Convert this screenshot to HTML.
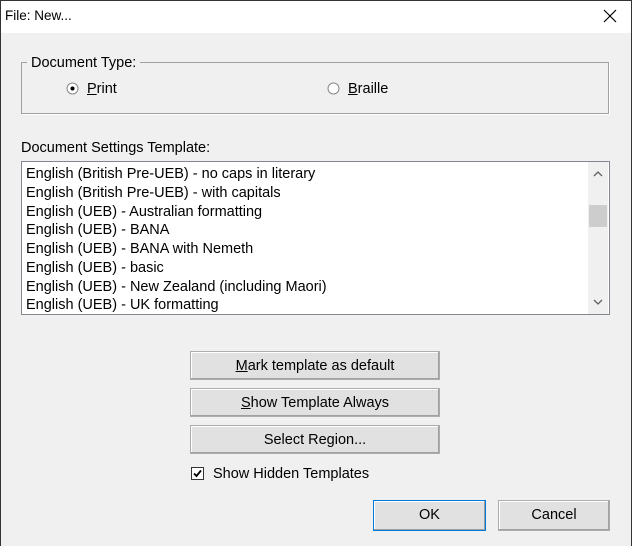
<!DOCTYPE html>
<html><head><style>
*{margin:0;padding:0;box-sizing:border-box}
body{width:632px;height:546px;background:#f0f0f0;font-family:"Liberation Sans",sans-serif;font-size:14.5px;color:#000;position:relative;overflow:hidden}
.a{position:absolute}
.title{left:0;top:0;width:632px;height:33px;background:#fff}
.btn{position:absolute;background:#e1e1e1;border:1px solid #adadad;text-align:center;line-height:28px;box-shadow:inset -1px -1px 0 #a0a0a0, inset 1px 1px 0 #fff}
u{text-decoration:underline}
.li{position:absolute;left:4px;white-space:nowrap}
</style></head><body>
<div class="a title"></div>
<div class="a" style="left:0;top:0;width:1px;height:546px;background:#333"></div>
<div class="a" style="left:631px;top:0;width:1px;height:546px;background:#333"></div>
<div class="a" style="left:0;top:0;width:632px;height:1px;background:#333"></div>
<div class="a" style="left:5px;top:8px;font-size:13.5px">File: New...</div>
<svg class="a" style="left:603px;top:9px" width="14" height="14"><path d="M1 1L13 13M13 1L1 13" stroke="#000" stroke-width="1.2"/></svg>

<div class="a" style="left:21px;top:62px;width:588px;height:52px;border:1px solid #a0a0a0;box-shadow:1px 1px 0 #fff"></div>
<div class="a" style="left:27px;top:55px;background:#f0f0f0;padding:0 4px">Document Type:</div>
<svg class="a" style="left:66px;top:82px" width="13" height="13"><circle cx="6.5" cy="6.5" r="5.5" fill="#fff" stroke="#888"/><circle cx="6.5" cy="6.5" r="2" fill="#000"/></svg>
<div class="a" style="left:87px;top:81px"><u>P</u>rint</div>
<svg class="a" style="left:327px;top:82px" width="13" height="13"><circle cx="6.5" cy="6.5" r="5.5" fill="#fff" stroke="#888"/></svg>
<div class="a" style="left:348px;top:81px"><u>B</u>raille</div>

<div class="a" style="left:21px;top:140px">Document Settings Template:</div>
<div class="a" style="left:21px;top:161px;width:589px;height:154px;background:#fff;border:1px solid #828790;overflow:hidden">
<div class="li" style="top:4px">English (British Pre-UEB) - no caps in literary</div>
<div class="li" style="top:23px">English (British Pre-UEB) - with capitals</div>
<div class="li" style="top:42px">English (UEB) - Australian formatting</div>
<div class="li" style="top:60px">English (UEB) - BANA</div>
<div class="li" style="top:79px">English (UEB) - BANA with Nemeth</div>
<div class="li" style="top:98px">English (UEB) - basic</div>
<div class="li" style="top:117px">English (UEB) - New Zealand (including Maori)</div>
<div class="li" style="top:135px">English (UEB) - UK formatting</div>
<div class="a" style="left:566px;top:0;width:20px;height:152px;background:#f0f0f0"></div>
<svg class="a" style="left:570px;top:8px" width="12" height="8"><path d="M2 6L6 2L10 6" stroke="#606060" fill="none" stroke-width="1.3"/></svg>
<div class="a" style="left:567px;top:43px;width:18px;height:22px;background:#cdcdcd"></div>
<svg class="a" style="left:570px;top:136px" width="12" height="8"><path d="M2 2L6 6L10 2" stroke="#606060" fill="none" stroke-width="1.3"/></svg>
</div>

<div class="btn" style="left:190px;top:351px;width:250px;height:29px"><u>M</u>ark template as default</div>
<div class="btn" style="left:190px;top:388px;width:250px;height:29px"><u>S</u>how Template Always</div>
<div class="btn" style="left:190px;top:425px;width:250px;height:29px">Select Region...</div>
<svg class="a" style="left:191px;top:467px" width="13" height="13"><rect x="0.5" y="0.5" width="12" height="12" fill="#fff" stroke="#333"/><path d="M3 6.5L5.5 9L10 3.5" stroke="#000" stroke-width="1.8" fill="none"/></svg>
<div class="a" style="left:213px;top:466px">Show Hidden Templates</div>
<div class="btn" style="left:373px;top:500px;width:113px;height:31px;border-color:#0078d7;line-height:29px">OK</div>
<div class="btn" style="left:498px;top:500px;width:112px;height:31px;line-height:29px">Cancel</div>
</body></html>
